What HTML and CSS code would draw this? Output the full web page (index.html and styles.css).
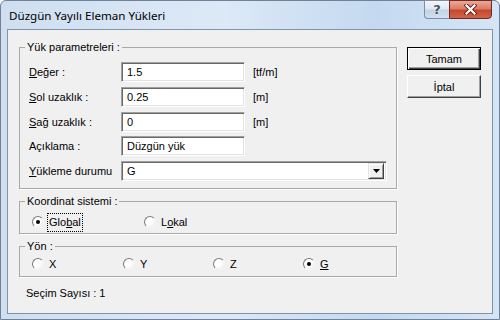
FILE: index.html
```html
<!DOCTYPE html>
<html lang="tr">
<head>
    <meta charset="UTF-8">
    <title>Düzgün Yayılı Eleman Yükleri</title>
    <link rel="stylesheet" href="styles.css">
</head>
<body>
    <div class="window">
        <div class="titlebar">
            <span class="title">Düzgün Yayılı Eleman Yükleri</span>
            <div class="caption-btns">
                <span class="cap-help">?</span>
                <span class="cap-close">
                    <svg width="13" height="11" viewBox="0 0 13 11">
                        <path d="M2.5 1.5 L10.5 9.5 M10.5 1.5 L2.5 9.5" stroke="#5a1f14" stroke-width="4" stroke-linecap="square"/>
                        <path d="M2.5 1.5 L10.5 9.5 M10.5 1.5 L2.5 9.5" stroke="#fff" stroke-width="2.2" stroke-linecap="square"/>
                    </svg>
                </span>
            </div>
        </div>

        <div class="client">
            <div class="main">
                <fieldset class="group params">
                    <legend>Yük parametreleri :</legend>
                    <div class="params-grid">
                        <label><u>D</u>eğer :</label>
                        <input type="text" class="field" value="1.5">
                        <span class="unit">[tf/m]</span>

                        <label><u>S</u>ol uzaklık :</label>
                        <input type="text" class="field" value="0.25">
                        <span class="unit">[m]</span>

                        <label><u>S</u>ağ uzaklık :</label>
                        <input type="text" class="field" value="0">
                        <span class="unit">[m]</span>

                        <label>Açıklama :</label>
                        <input type="text" class="field" value="Düzgün yük">
                        <span></span>

                        <label><u>Y</u>ükleme durumu</label>
                        <div class="combo">
                            <span class="combo-text">G</span>
                            <span class="drop-btn">
                                <svg width="7" height="4" viewBox="0 0 7 4"><path d="M0 0 H7 L3.5 4 Z" fill="#000"/></svg>
                            </span>
                        </div>
                    </div>
                </fieldset>

                <fieldset class="group coord">
                    <legend>Koordinat sistemi :</legend>
                    <div class="radio-row two">
                        <div class="opt">
                            <span class="radio checked"></span>
                            <span class="opt-label focus">Glo<u>b</u>al</span>
                        </div>
                        <div class="opt">
                            <span class="radio"></span>
                            <span class="opt-label">L<u>o</u>kal</span>
                        </div>
                    </div>
                </fieldset>

                <fieldset class="group dir">
                    <legend>Yön :</legend>
                    <div class="radio-row four">
                        <div class="opt"><span class="radio"></span><span class="opt-label">X</span></div>
                        <div class="opt"><span class="radio"></span><span class="opt-label">Y</span></div>
                        <div class="opt"><span class="radio"></span><span class="opt-label">Z</span></div>
                        <div class="opt"><span class="radio checked"></span><span class="opt-label"><u>G</u></span></div>
                    </div>
                </fieldset>

                <div class="count">Seçim Sayısı : 1</div>
            </div>

            <div class="side">
                <button class="btn default">Tamam</button>
                <button class="btn">İptal</button>
            </div>
        </div>
    </div>
</body>
</html>
```

FILE: styles.css
```css
body {
    margin: 0;
    width: 500px;
    height: 320px;
    overflow: hidden;
    font-family: "Liberation Sans", "DejaVu Sans", sans-serif;
    font-size: 11px;
    color: #000;
}

.window {
    width: 500px;
    height: 320px;
    box-sizing: border-box;
    border: 1px solid #6f8299;
    border-radius: 6px 6px 0 0;
    background: linear-gradient(to right, #cfdff0 0%, #dce9f7 45%, #c4d9f0 75%, #d5e5f5 100%);
    display: flex;
    flex-direction: column;
}

/* barra de título */
.titlebar {
    height: 28px;
    display: flex;
    justify-content: space-between;
    align-items: flex-start;
    padding: 0 7px 0 8px;
}

.title {
    font-family: "Noto Sans", "Open Sans", sans-serif;
    font-size: 11.6px;
    line-height: 14px;
    margin-top: 8px;
    color: #000;
}

.caption-btns {
    display: flex;
    margin-top: -1px;
}

.cap-help,
.cap-close {
    height: 19px;
    box-sizing: border-box;
    display: flex;
    align-items: center;
    justify-content: center;
}

.cap-help {
    width: 25px;
    border: 1px solid #7d8da2;
    border-right: none;
    border-radius: 0 0 0 4px;
    background: linear-gradient(to bottom, #f2f6fb 0%, #dfe8f2 45%, #c3d2e4 55%, #d3e0ee 100%);
    color: #44546a;
    font-family: "DejaVu Sans", sans-serif;
    font-weight: bold;
    font-size: 13px;
    text-shadow: 0 0 2px #fff;
}

.cap-close {
    width: 43px;
    border: 1px solid #6d2a1e;
    border-radius: 0 0 4px 0;
    background: linear-gradient(to bottom, #e9a99b 0%, #dc7b66 45%, #c8472c 55%, #d0644b 100%);
}

/* área do cliente */
.client {
    flex: 1;
    margin: 0 6px 5px 6px;
    border: 1px solid #8193ab;
    background: #f0f0f0;
    display: flex;
}

.main {
    width: 389px;
    padding-left: 11px;
    box-sizing: border-box;
}

.group {
    width: 378px;
    box-sizing: border-box;
    margin: 0;
    padding: 0;
    border: 1px solid #a9a9a9;
    box-shadow: 1px 1px 0 #fff;
    min-inline-size: 0;
}

.group legend {
    padding: 0 2px;
    margin-left: 5px;
    line-height: 13px;
}

.params {
    margin-top: 11px;
}

.coord {
    margin-top: 6px;
}

.dir {
    margin-top: 6px;
}

.params-grid {
    display: grid;
    grid-template-columns: 92px 124px 1fr;
    grid-auto-rows: 20px;
    row-gap: 4.75px;
    align-items: center;
    padding: 8px 9px 7px 9px;
}

.unit {
    padding-left: 8px;
}

.field {
    height: 20px;
    width: 124px;
    box-sizing: border-box;
    margin: 0;
    padding: 0 0 0 5px;
    font: inherit;
    color: #000;
    background: #fff;
    border: 1px solid;
    border-color: #a0a0a0 #fff #fff #a0a0a0;
    box-shadow: inset 1px 1px 0 #696969, inset -1px -1px 0 #e3e3e3;
    outline: none;
}

.combo {
    grid-column: 2 / 4;
    width: 266px;
    height: 20px;
    box-sizing: border-box;
    border: 1px solid;
    border-color: #a0a0a0 #fff #fff #a0a0a0;
    box-shadow: inset 1px 1px 0 #696969, inset -1px -1px 0 #e3e3e3;
    background: #fff;
    display: flex;
    align-items: center;
    justify-content: space-between;
    padding: 1px 2px 1px 5px;
}

.drop-btn {
    width: 16px;
    height: 16px;
    box-sizing: border-box;
    background: #f0f0f0;
    border: 1px solid;
    border-color: #e3e3e3 #404040 #404040 #e3e3e3;
    box-shadow: inset 1px 1px 0 #fff, inset -1px -1px 0 #a0a0a0;
    display: flex;
    align-items: center;
    justify-content: center;
}

/* botões de rádio */
.radio-row {
    display: grid;
    align-items: center;
    padding-left: 12px;
    height: 18px;
}

.radio-row.two {
    grid-template-columns: 112px 112px;
    margin: 5px 0 2px 0;
}

.radio-row.four {
    grid-template-columns: 91px 90px 90px 90px;
    margin: 2px 0 3px 0;
}

.opt {
    display: flex;
    align-items: center;
}

.radio {
    width: 12px;
    height: 12px;
    box-sizing: border-box;
    border-radius: 50%;
    border: 1px solid;
    border-color: #7b7b7b #f4f4f4 #f4f4f4 #7b7b7b;
    background: radial-gradient(circle at 40% 40%, #fff 0%, #fff 40%, #e4e4e4 100%);
    display: flex;
    align-items: center;
    justify-content: center;
}

.radio.checked::after {
    content: "";
    width: 4px;
    height: 4px;
    border-radius: 50%;
    background: #000;
}

.opt-label {
    margin-left: 4px;
    padding: 2px 1px;
    line-height: 13px;
}

.opt-label.focus {
    outline: 1px dotted #000;
    outline-offset: 0;
}

.count {
    margin: 10px 0 0 7px;
    line-height: 13px;
}

/* botões laterais */
.side {
    padding: 17px 0 0 10px;
    display: flex;
    flex-direction: column;
    gap: 5px;
}

.btn {
    width: 74px;
    height: 23px;
    box-sizing: border-box;
    margin: 0;
    padding: 0;
    font: inherit;
    color: #000;
    background: #f0f0f0;
    border: 1px solid;
    border-color: #fff #404040 #404040 #fff;
    box-shadow: inset -1px -1px 0 #a0a0a0;
}

.btn.default {
    border: 1px solid #000;
    box-shadow: inset 1px 1px 0 #fff, inset -1px -1px 0 #404040, inset -2px -2px 0 #a0a0a0;
}
```
